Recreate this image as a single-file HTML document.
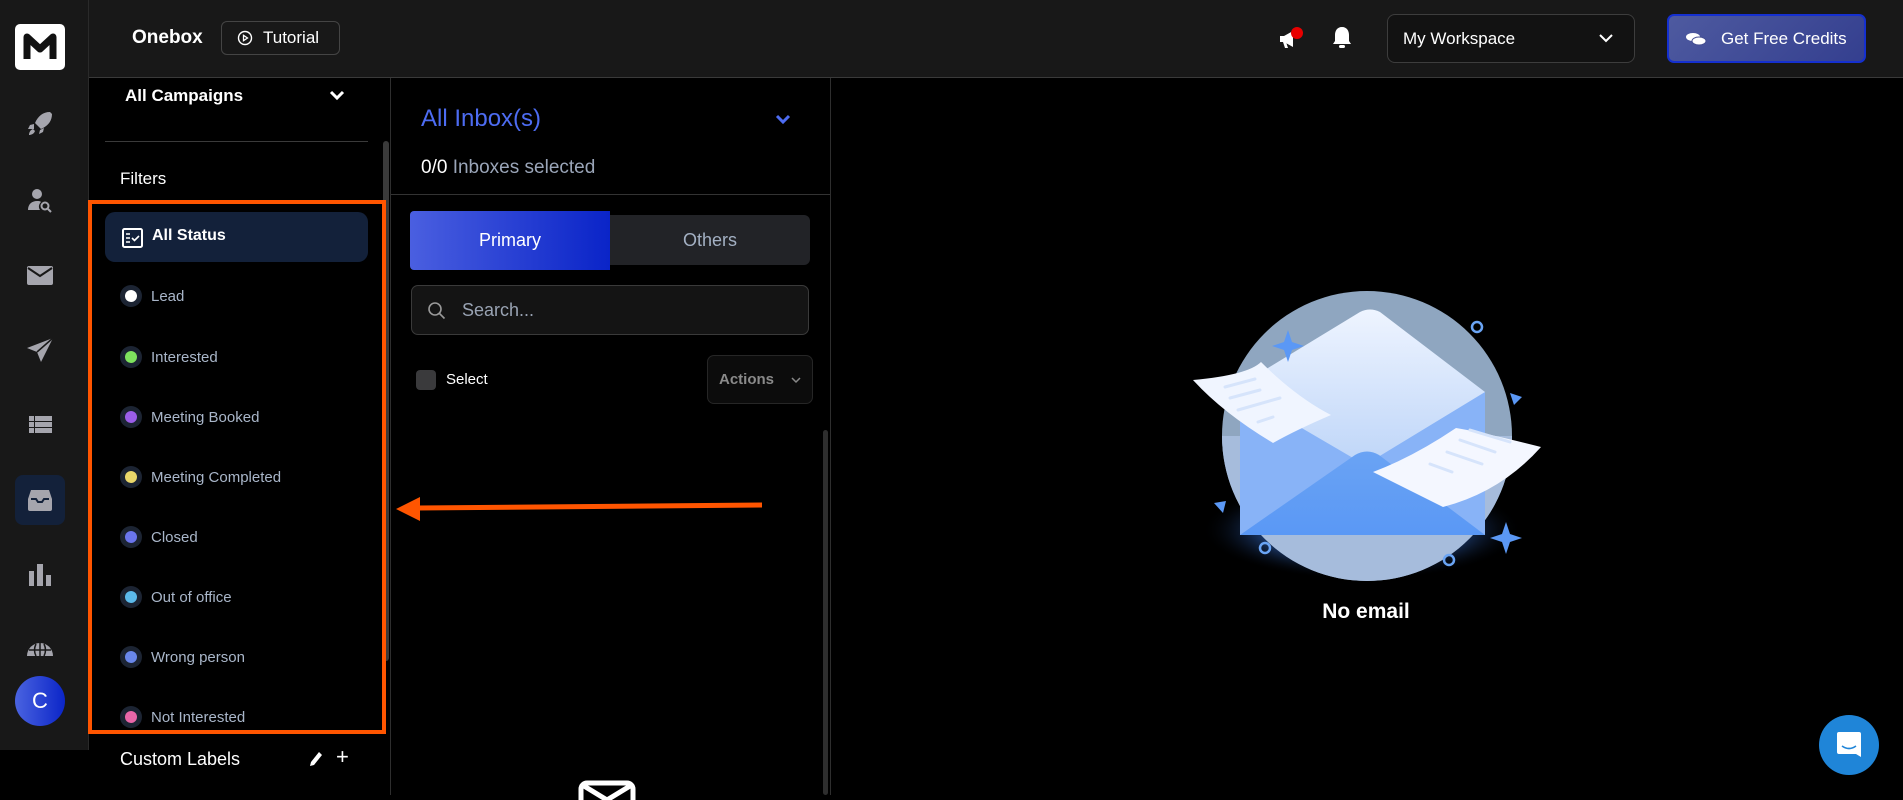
<!DOCTYPE html>
<html><head><meta charset="utf-8"><style>
*{box-sizing:border-box;margin:0;padding:0}
body{width:1903px;height:795px;background:#000;font-family:"Liberation Sans",sans-serif;position:relative;overflow:hidden;color:#fff}
.abs{position:absolute}
.hdr{left:0;top:0;width:1903px;height:78px;background:#181818;border-bottom:1px solid #3a3a3a}
.side{left:0;top:0;width:89px;height:750px;background:#181818;border-right:1px solid #2a2a2a}
.ic{position:absolute;left:24px;width:32px;height:32px}
.item{position:absolute;left:120px;font-size:15px;color:#a9b6c9;display:flex;align-items:center}
.dot{width:22px;height:22px;border-radius:50%;background:#1c2433;display:flex;align-items:center;justify-content:center;margin-right:9px}
.dot i{width:12px;height:12px;border-radius:50%;display:block}
</style></head><body>
<div class="abs hdr"></div>
<div class="abs side"></div>
<div class="abs" style="left:15px;top:24px;width:50px;height:46px;background:#fff;border-radius:5px"></div>
<svg class="abs" style="left:15px;top:24px" width="50" height="46" viewBox="0 0 50 46"><path d="M12 35V13l13 12 13-12v22" fill="none" stroke="#111" stroke-width="7" stroke-linejoin="round"/></svg>
<svg class="ic" style="top:108px" viewBox="0 0 32 32"><path d="M26 4c-7 0-12 4-15 11l6 6c7-3 11-8 11-15zM10 16l-4 1-2 4h6zM16 22l-1 4 4-2 1-4zM9 21c-3 1-4 4-4 6 2 0 5-1 6-4z" fill="#a5a5ad"/></svg>
<svg class="ic" style="top:184px" viewBox="0 0 32 32"><circle cx="13" cy="10" r="5" fill="#a5a5ad"/><path d="M4 26c0-6 4-9 9-9 2 0 3 0 4 1-2 2-3 5-1 8z" fill="#a5a5ad"/><circle cx="21" cy="22" r="3.5" fill="none" stroke="#a5a5ad" stroke-width="2"/><path d="M24 25l3 3" stroke="#a5a5ad" stroke-width="2"/></svg>
<svg class="ic" style="top:259px" viewBox="0 0 32 32"><rect x="3" y="7" width="26" height="19" rx="2" fill="#a5a5ad"/><path d="M4 9l12 8 12-8" fill="none" stroke="#181818" stroke-width="2"/></svg>
<svg class="ic" style="top:334px" viewBox="0 0 32 32"><path d="M29 4L3 14l10 4 4 10z" fill="#a5a5ad"/><path d="M13 18L29 4" stroke="#181818" stroke-width="1.5"/></svg>
<svg class="ic" style="top:409px" viewBox="0 0 32 32"><g fill="#a5a5ad"><rect x="5" y="7" width="5" height="5"/><rect x="11" y="7" width="17" height="5"/><rect x="5" y="13" width="5" height="5"/><rect x="11" y="13" width="17" height="5"/><rect x="5" y="19" width="5" height="5"/><rect x="11" y="19" width="17" height="5"/></g></svg>
<div class="abs" style="left:15px;top:475px;width:50px;height:50px;background:#13213a;border-radius:8px"></div>
<svg class="ic" style="top:484px" viewBox="0 0 32 32"><path d="M7 6h18l3 9v10a2 2 0 0 1-2 2H6a2 2 0 0 1-2-2V15z" fill="#a5a5ad"/><path d="M7 15h5l2 3h4l2-3h5" fill="none" stroke="#13213a" stroke-width="2"/></svg>
<svg class="ic" style="top:559px" viewBox="0 0 32 32"><g fill="#a5a5ad"><rect x="5" y="12" width="5" height="15"/><rect x="13" y="5" width="6" height="22"/><rect x="22" y="16" width="5" height="11"/></g></svg>
<svg class="ic" style="top:638px;height:18px;overflow:hidden" viewBox="0 0 32 18"><path d="M3 18a13 13 0 0 1 26 0z" fill="#a5a5ad"/><path d="M16 5v13M5 12h22M12 6q-3 6 0 12M20 6q3 6 0 12" stroke="#181818" stroke-width="1.5" fill="none"/></svg>
<div class="abs" style="left:15px;top:676px;width:50px;height:50px;border-radius:50%;background:linear-gradient(90deg,#4a63e0,#0b25c8);font-size:22px;display:flex;align-items:center;justify-content:center">C</div>
<div class="abs" style="left:132px;top:27px;font-size:19px;font-weight:bold">Onebox</div>
<div class="abs" style="left:221px;top:21px;width:119px;height:34px;border:1px solid #444;border-radius:6px;display:flex;align-items:center;padding-left:15px;font-size:17px;white-space:nowrap">
<svg width="16" height="16" viewBox="0 0 16 16" style="margin-right:10px"><circle cx="8" cy="8" r="6.5" fill="none" stroke="#fff" stroke-width="1.4"/><path d="M6.5 5.3v5.4L10.5 8z" fill="none" stroke="#fff" stroke-width="1.3"/></svg>Tutorial</div>
<svg class="abs" style="left:1277px;top:24px" width="28" height="28" viewBox="0 0 28 28"><path d="M3 12h4l9-5v16l-9-5H3z" fill="#fff"/><path d="M6 18l2 6h3l-2-6z" fill="#fff"/><circle cx="20" cy="9" r="6" fill="#e80000"/></svg>
<svg class="abs" style="left:1330px;top:24px" width="24" height="28" viewBox="0 0 24 28"><path d="M12 3c-5 0-7 4-7 8v6l-2 3h18l-2-3v-6c0-4-2-8-7-8z" fill="#fff"/><rect x="9" y="21" width="6" height="3" rx="1.5" fill="#fff"/></svg>
<div class="abs" style="left:1387px;top:14px;width:248px;height:49px;border:1px solid #3d3d3d;border-radius:8px;background:#121212;font-size:17px;display:flex;align-items:center;padding-left:15px;white-space:nowrap">My Workspace
<svg class="abs" style="right:20px;top:17px" width="16" height="12" viewBox="0 0 16 12"><path d="M2 3l6 6 6-6" fill="none" stroke="#fff" stroke-width="2"/></svg></div>
<div class="abs" style="left:1667px;top:14px;width:199px;height:49px;border:2px solid #1530d0;border-radius:7px;background:linear-gradient(135deg,#4e5aa0,#343f8f);font-size:17px;display:flex;align-items:center;padding-left:16px;white-space:nowrap">
<svg width="22" height="16" viewBox="0 0 22 16" style="margin-right:14px;flex:none"><ellipse cx="8" cy="6" rx="7" ry="4" fill="#fff"/><ellipse cx="14" cy="10" rx="7" ry="4" fill="#fff" stroke="#444d90"/></svg>Get Free Credits</div>
<div class="abs" style="left:390px;top:78px;width:1px;height:717px;background:#2e2e2e"></div>
<div class="abs" style="left:125px;top:86px;font-size:17px;font-weight:bold">All Campaigns</div>
<svg class="abs" style="left:329px;top:90px" width="16" height="12" viewBox="0 0 16 12"><path d="M2 2l6 6 6-6" fill="none" stroke="#fff" stroke-width="3"/></svg>
<div class="abs" style="left:105px;top:141px;width:263px;height:1px;background:#3a3a3a"></div>
<div class="abs" style="left:383px;top:141px;width:6px;height:520px;background:#3a3a3a;border-radius:3px"></div>
<div class="abs" style="left:120px;top:169px;font-size:17px">Filters</div>
<div class="abs" style="left:105px;top:212px;width:263px;height:50px;background:#13213a;border-radius:10px"></div>
<svg class="abs" style="left:122px;top:228px" width="21" height="20" viewBox="0 0 21 20"><rect x="1" y="1" width="19" height="18" rx="1.5" fill="none" stroke="#fff" stroke-width="2"/><path d="M4 6h4M4 10h4M4 14h4M10 10l2.5 2.5L17 8" stroke="#fff" stroke-width="1.6" fill="none"/></svg>
<div class="abs" style="left:152px;top:227px;font-size:16px;font-weight:bold">All Status</div>
<div class="item" style="top:285px"><span class="dot"><i style="background:#fff"></i></span>Lead</div>
<div class="item" style="top:346px"><span class="dot"><i style="background:#7ee25e"></i></span>Interested</div>
<div class="item" style="top:406px"><span class="dot"><i style="background:#9b5ee8"></i></span>Meeting Booked</div>
<div class="item" style="top:466px"><span class="dot"><i style="background:#e9d76a"></i></span>Meeting Completed</div>
<div class="item" style="top:526px"><span class="dot"><i style="background:#6a75ec"></i></span>Closed</div>
<div class="item" style="top:586px"><span class="dot"><i style="background:#5cb9ea"></i></span>Out of office</div>
<div class="item" style="top:646px"><span class="dot"><i style="background:#6987ea"></i></span>Wrong person</div>
<div class="item" style="top:706px"><span class="dot"><i style="background:#e866a8"></i></span>Not Interested</div>
<div class="abs" style="left:88px;top:200px;width:298px;height:534px;border:4px solid #ff5500"></div>
<div class="abs" style="left:120px;top:749px;font-size:18px">Custom Labels</div>
<svg class="abs" style="left:308px;top:750px" width="16" height="18" viewBox="0 0 16 18"><path d="M11 2l3 3-8 10-4 1 1-4z" fill="#fff"/></svg>
<div class="abs" style="left:336px;top:744px;font-size:22px">+</div>
<svg class="abs" style="left:390px;top:490px" width="380" height="40" viewBox="0 0 380 40"><path d="M28 15.5L372 12.5v5L28 20.5z" fill="#ff5500"/><path d="M6 19L30 7v24z" fill="#ff5500"/></svg>
<div class="abs" style="left:830px;top:78px;width:1px;height:717px;background:#2e2e2e"></div>
<div class="abs" style="left:421px;top:105px;font-size:24px;color:#4d6cf2">All Inbox(s)</div>
<svg class="abs" style="left:775px;top:114px" width="16" height="12" viewBox="0 0 16 12"><path d="M2 2l6 6 6-6" fill="none" stroke="#4d6cf2" stroke-width="3"/></svg>
<div class="abs" style="left:421px;top:157px;font-size:19px"><span style="color:#fff">0/0</span> <span style="color:#9aa5b8">Inboxes selected</span></div>
<div class="abs" style="left:391px;top:194px;width:439px;height:1px;background:#333"></div>
<div class="abs" style="left:410px;top:215px;width:400px;height:50px;background:#222327;border-radius:6px"></div>
<div class="abs" style="left:410px;top:211px;width:200px;height:59px;background:linear-gradient(90deg,#4a5fe0,#0a24c8);border-radius:4px 0 0 4px;display:flex;align-items:center;justify-content:center;font-size:18px">Primary</div>
<div class="abs" style="left:610px;top:215px;width:200px;height:50px;display:flex;align-items:center;justify-content:center;font-size:18px;color:#a3b0c3">Others</div>
<div class="abs" style="left:411px;top:285px;width:398px;height:50px;border:1px solid #3a3a3a;border-radius:7px;background:#141414;display:flex;align-items:center;padding-left:50px;font-size:18px;color:#99a3b3">Search...</div>
<svg class="abs" style="left:427px;top:301px" width="20" height="20" viewBox="0 0 20 20"><circle cx="8" cy="8" r="6" fill="none" stroke="#999" stroke-width="1.6"/><path d="M12.5 12.5l5 5" stroke="#999" stroke-width="1.6"/></svg>
<div class="abs" style="left:416px;top:370px;width:20px;height:20px;background:#3a3a3c;border-radius:4px"></div>
<div class="abs" style="left:446px;top:371px;font-size:15px">Select</div>
<div class="abs" style="left:707px;top:355px;width:106px;height:49px;border:1px solid #262626;border-radius:7px;background:#0c0c0c;font-size:15px;color:#8a8a8a;display:flex;align-items:center;padding-left:11px;font-weight:bold">Actions<svg style="margin-left:16px" width="12" height="8" viewBox="0 0 12 8"><path d="M2 2l4 4 4-4" fill="none" stroke="#888" stroke-width="1.5"/></svg></div>
<div class="abs" style="left:823px;top:430px;width:5px;height:365px;background:#2e2e2e;border-radius:3px"></div>
<svg class="abs" style="left:578px;top:780px" width="58" height="20" viewBox="0 0 58 20"><rect x="3" y="3" width="52" height="30" rx="6" fill="none" stroke="#fff" stroke-width="5"/><path d="M6 6l23 14 23-14" fill="none" stroke="#fff" stroke-width="5"/></svg>
<svg class="abs" style="left:1150px;top:250px" width="420" height="400" viewBox="0 0 420 400">
<defs><linearGradient id="fl" x1="0" y1="0" x2="0" y2="1"><stop offset="0" stop-color="#eef4ff"/><stop offset="1" stop-color="#a9c8f5"/></linearGradient>
<linearGradient id="bd" x1="0" y1="0" x2="0" y2="1"><stop offset="0" stop-color="#6aa3f4"/><stop offset="1" stop-color="#5a98f5"/></linearGradient>
<radialGradient id="gl"><stop offset="0.6" stop-color="#3d7ff0" stop-opacity="0.5"/><stop offset="1" stop-color="#000" stop-opacity="0"/></radialGradient></defs>
<ellipse cx="212" cy="280" rx="160" ry="50" fill="url(#gl)"/>
<circle cx="217" cy="186" r="145" fill="#8fa6c0"/>
<path d="M72 186a145 145 0 0 0 290 0z" fill="#a6bcdc"/>
<path d="M90 135L210 62q10-5 20 0l105 80v143H90z" fill="url(#fl)"/>
<path d="M90 142v143h245V142L215 215z" fill="#88b3f7"/>
<path d="M90 285l115-80q12-7 24 0l106 80z" fill="url(#bd)"/>
<path d="M43 130q55-5 68-18 35 35 70 53-35 15-58 28-50-30-80-63z" fill="#f0f5ff"/>
<path d="M223 222q40-15 83-44 30 5 85 19-40 45-98 60z" fill="#f4f7ff"/>
<g stroke="#d6e4fb" stroke-width="3" stroke-linecap="round"><path d="M75 137l30-8M80 148l30-8M88 160l42-12M108 172l15-5"/><path d="M320 180l40 12M310 190l35 12M297 202l35 12M280 214l22 8"/></g>
<path d="M138 80l4 12 12 4-12 4-4 12-4-12-12-4 12-4z" fill="#5b98f5"/>
<path d="M356 272l4 12 12 4-12 4-4 12-4-12-12-4 12-4z" fill="#5b98f5"/>
<circle cx="327" cy="77" r="5" fill="none" stroke="#6aa4f4" stroke-width="2.5"/>
<circle cx="115" cy="298" r="5" fill="none" stroke="#6aa4f4" stroke-width="2.5"/>
<circle cx="299" cy="310" r="5" fill="none" stroke="#6aa4f4" stroke-width="2.5"/>
<path d="M360 143l12 4-8 8z" fill="#5b98f5"/><path d="M64 253l12-2-3 12z" fill="#5b98f5"/>
</svg>
<div class="abs" style="left:1266px;top:600px;width:200px;text-align:center;font-size:21px;font-weight:bold">No email</div>
<div class="abs" style="left:1819px;top:715px;width:60px;height:60px;border-radius:50%;background:#1f85d8"></div>
<svg class="abs" style="left:1835px;top:730px" width="28" height="30" viewBox="0 0 28 30"><path d="M4 2h20a2 2 0 0 1 2 2v23l-5-3H4a2 2 0 0 1-2-2V4a2 2 0 0 1 2-2z" fill="#fff"/><path d="M7 16q7 5 14 0" fill="none" stroke="#1f85d8" stroke-width="1.6"/></svg>
</body></html>
